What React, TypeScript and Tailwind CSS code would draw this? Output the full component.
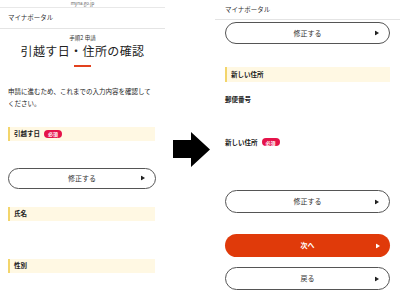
import clsx from 'clsx';

const FONT = { fontFamily: '"Noto Sans CJK JP", "Noto Sans", sans-serif' };

function Tri({ color = '#222' }: { color?: string }) {
    return (
        <svg width="4" height="5" viewBox="0 0 4 5" className="absolute right-[10px] top-1/2 -translate-y-1/2">
            <polygon points="0,0 4,2.5 0,5" fill={color} />
        </svg>
    );
}

function Badge() {
    return (
        <span className="ml-[4px] inline-flex h-[8px] items-center rounded-full bg-[#e5134a] px-[4px] text-[5px] leading-none text-white">
            必須
        </span>
    );
}

function Label({ text, required, tall }: { text: string; required?: boolean; tall?: boolean }) {
    return (
        <div
            className={clsx(
                'flex items-center border-l-2 border-[#f3d56b] bg-[#fff8e3] pl-[4px] text-[6.5px] font-bold text-[#222]',
                tall ? 'h-[15px]' : 'h-[14px]'
            )}
        >
            {text}
            {required && <Badge />}
        </div>
    );
}

function PillButton({ text, primary, h = 'h-[22px]' }: { text: string; primary?: boolean; h?: string }) {
    return (
        <div
            className={clsx(
                'relative flex items-center justify-center rounded-full text-[7px]',
                h,
                primary ? 'bg-[#e03a0a] font-bold text-white' : 'border border-[#555] bg-white text-[#333]'
            )}
        >
            {text}
            <Tri color={primary ? '#fff' : '#222'} />
        </div>
    );
}

export default function App() {
    return (
        <div className="flex h-[300px] w-[400px] overflow-hidden bg-white text-[#222]" style={FONT}>
            {/* Left screen */}
            <div className="flex w-[165px] shrink-0 flex-col">
                <div className="h-[8px] border-b border-[#e8e8e8] text-center text-[4.5px] leading-[7px] text-[#666]">
                    myna.go.jp
                </div>
                <div className="flex h-[21px] items-center border-b border-[#e4e4e4] pl-[8px] text-[6.5px] text-[#333]">
                    マイナポータル
                </div>
                <div className="mt-[5px] text-center text-[5.5px] leading-[8px] text-[#333]">手順2 申請</div>
                <div className="mt-[1px] text-center text-[12px] leading-[16px] tracking-[0.4px] text-[#222]">
                    引越す日・住所の確認
                </div>
                <div className="mx-auto mt-[6px] h-[1.5px] w-[17px] bg-[#e2411e]" />
                <div className="mt-[18px] pl-[8px] pr-[8px] text-[6.5px] leading-[12.5px] text-[#222]">
                    申請に進むため、これまでの入力内容を確認してください。
                </div>
                <div className="ml-[8px] mr-[10px] mt-[17px]">
                    <Label text="引越す日" required />
                </div>
                <div className="ml-[8px] mr-[9px] mt-[27px]">
                    <PillButton text="修正する" h="h-[21px]" />
                </div>
                <div className="ml-[8px] mr-[10px] mt-[18px]">
                    <Label text="氏名" />
                </div>
                <div className="ml-[8px] mr-[10px] mt-[38px]">
                    <Label text="性別" />
                </div>
            </div>

            {/* Arrow */}
            <div className="flex w-[50px] shrink-0 items-center justify-center">
                <svg width="38" height="36" viewBox="0 0 38 36" className="mt-[-1px] ml-[4px]">
                    <polygon points="0,8 18,8 18,0 37,17.5 18,35 18,26 0,26" fill="#000" />
                </svg>
            </div>

            {/* Right screen */}
            <div className="flex min-w-0 flex-1 flex-col">
                <div className="flex h-[20px] items-center border-b border-[#e4e4e4] pl-[10px] text-[6.5px] text-[#333]">
                    マイナポータル
                </div>
                <div className="ml-[10px] mr-[10px] mt-[2px]">
                    <PillButton text="修正する" />
                </div>
                <div className="ml-[10px] mr-[10px] mt-[23px]">
                    <Label text="新しい住所" tall />
                </div>
                <div className="ml-[10px] mt-[12px] text-[6.5px] font-bold leading-[10px]">郵便番号</div>
                <div className="ml-[10px] mt-[33px] flex items-center text-[6.5px] font-bold leading-[10px]">
                    新しい住所
                    <Badge />
                </div>
                <div className="ml-[10px] mr-[10px] mt-[43px]">
                    <PillButton text="修正する" h="h-[23px]" />
                </div>
                <div className="ml-[10px] mr-[10px] mt-[21px]">
                    <PillButton text="次へ" primary h="h-[23px]" />
                </div>
                <div className="ml-[10px] mr-[10px] mt-[10px]">
                    <PillButton text="戻る" h="h-[23px]" />
                </div>
            </div>
        </div>
    );
}
